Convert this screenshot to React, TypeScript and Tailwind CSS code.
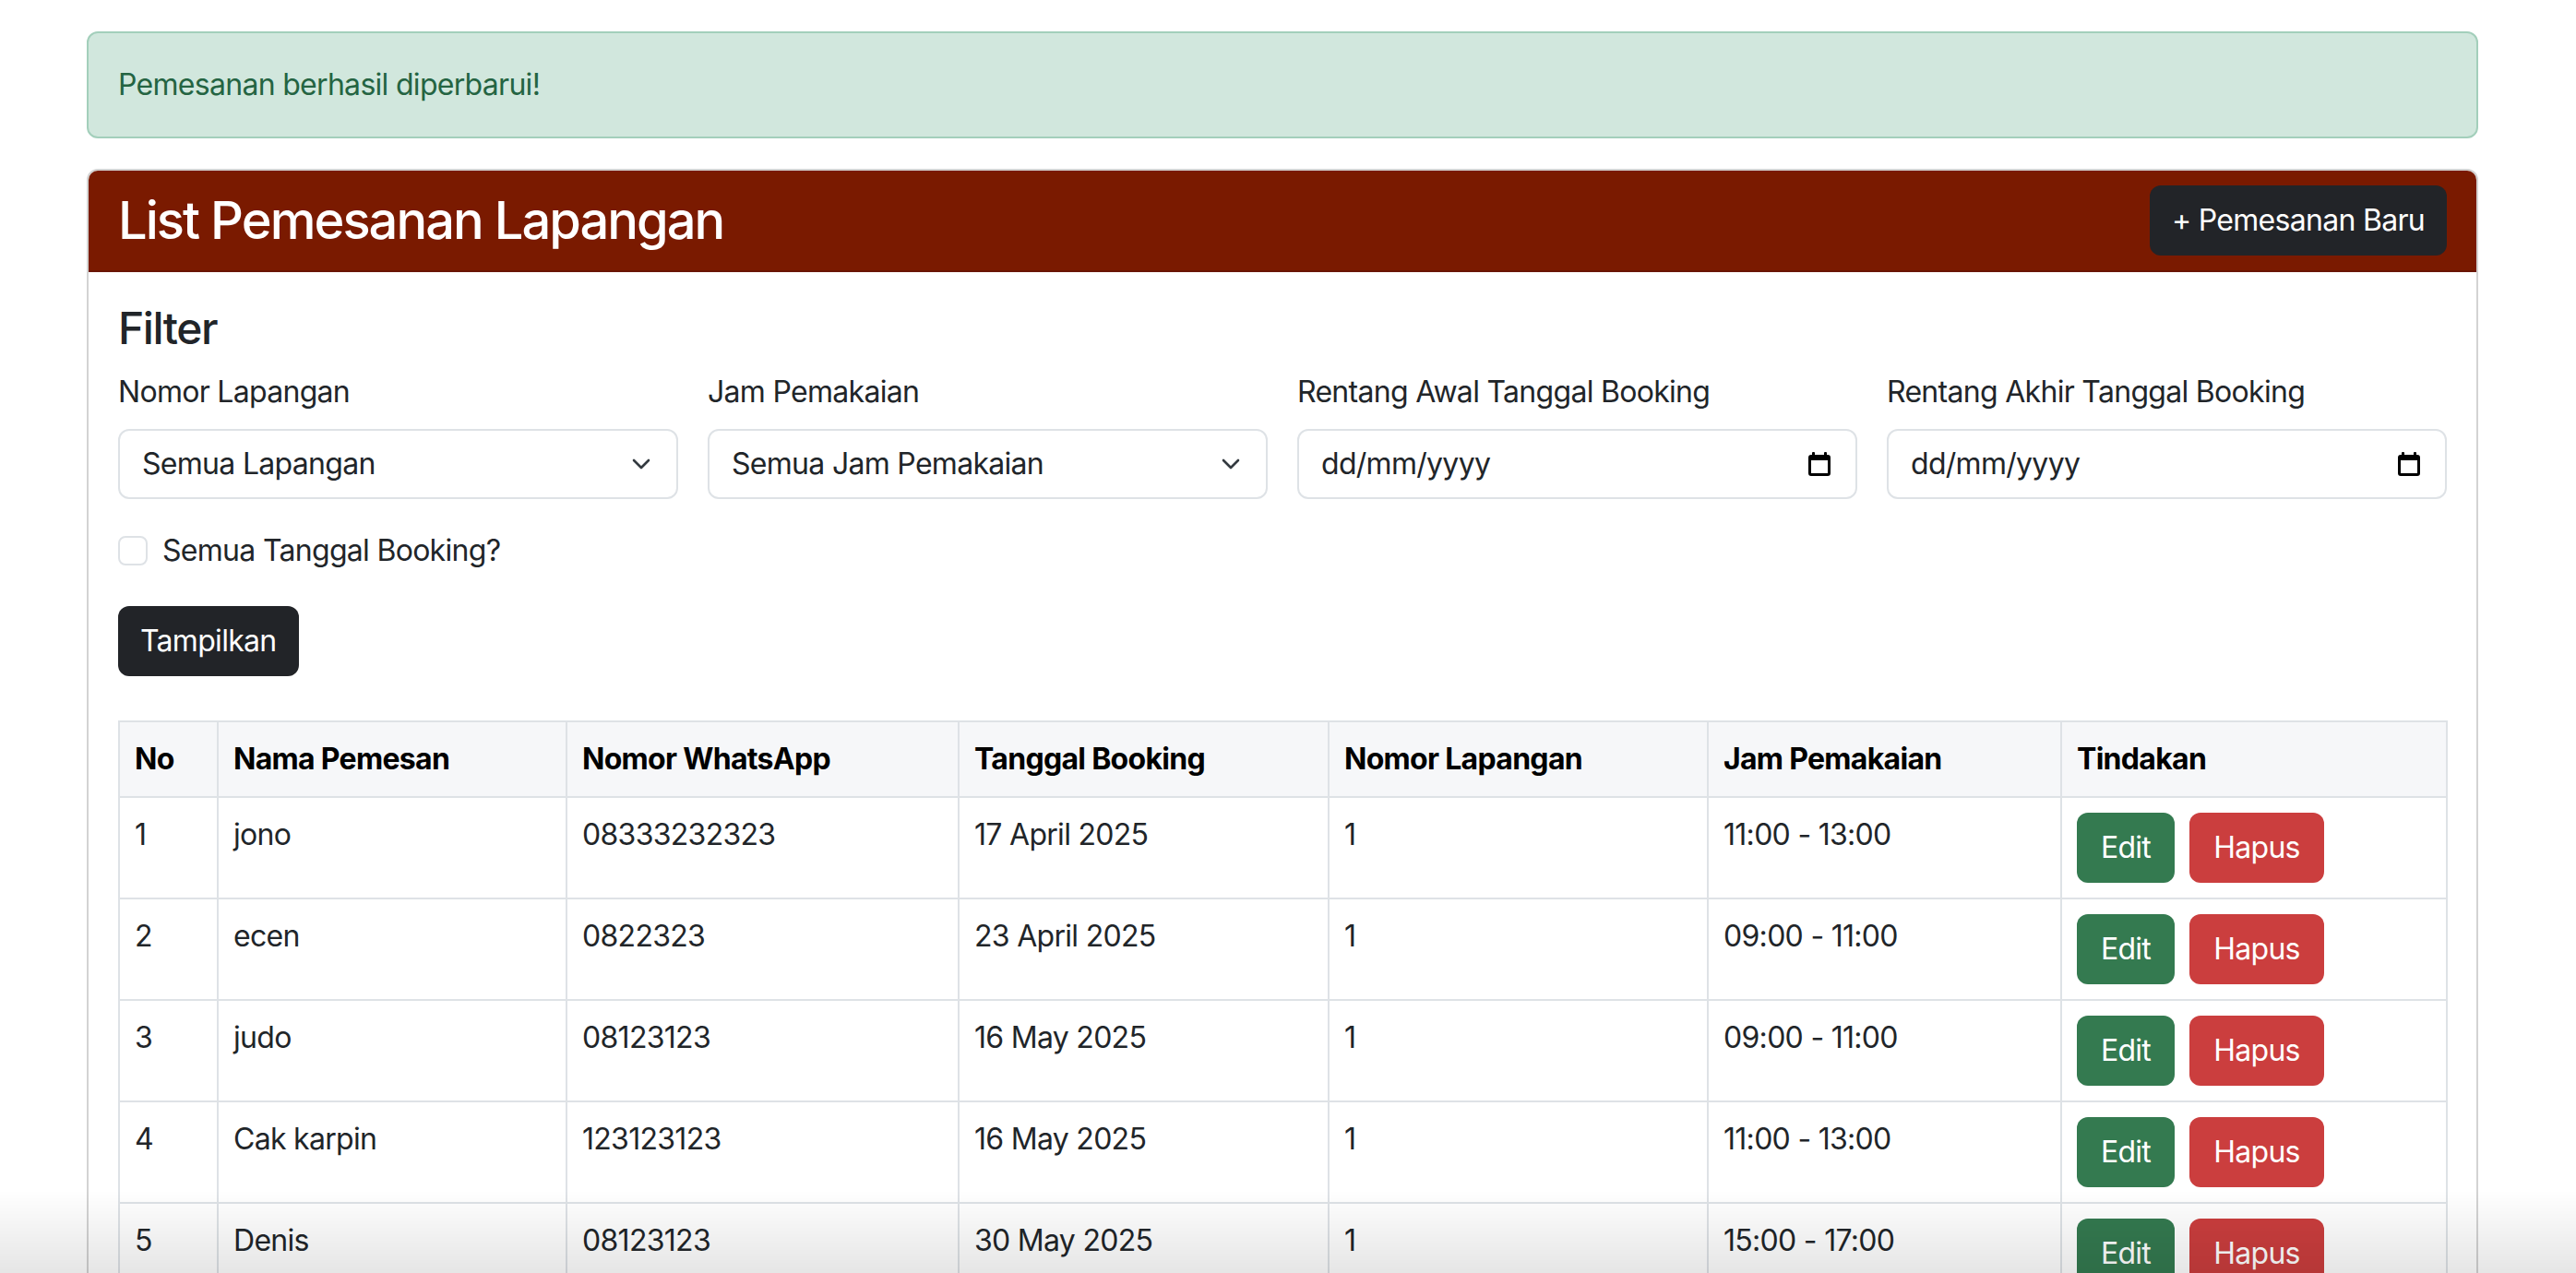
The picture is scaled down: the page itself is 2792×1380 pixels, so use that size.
const ROWS = [
  { no: 1, nama: "jono", wa: "08333232323", tanggal: "17 April 2025", lapangan: "1", jam: "11:00 - 13:00" },
  { no: 2, nama: "ecen", wa: "0822323", tanggal: "23 April 2025", lapangan: "1", jam: "09:00 - 11:00" },
  { no: 3, nama: "judo", wa: "08123123", tanggal: "16 May 2025", lapangan: "1", jam: "09:00 - 11:00" },
  { no: 4, nama: "Cak karpin", wa: "123123123", tanggal: "16 May 2025", lapangan: "1", jam: "11:00 - 13:00" },
  { no: 5, nama: "Denis", wa: "08123123", tanggal: "30 May 2025", lapangan: "1", jam: "15:00 - 17:00" },
];

const HEADERS = [
  { label: "No", w: "w-[107px]" },
  { label: "Nama Pemesan", w: "w-[378px]" },
  { label: "Nomor WhatsApp", w: "w-[425px]" },
  { label: "Tanggal Booking", w: "w-[401px]" },
  { label: "Nomor Lapangan", w: "w-[411px]" },
  { label: "Jam Pemakaian", w: "w-[383px]" },
  { label: "Tindakan", w: "w-[418px]" },
];

function Chevron() {
  return (
    <svg width="22" height="14" viewBox="0 0 22 14" fill="none" stroke="#343a40" strokeWidth="2.6" strokeLinecap="round" strokeLinejoin="round">
      <path d="m3 3 8 8 8-8" />
    </svg>
  );
}

function CalendarIcon() {
  return (
    <svg width="26" height="28" viewBox="0 0 26 28" fill="#000">
      <rect x="5" y="1" width="3" height="5" rx="1" />
      <rect x="18" y="1" width="3" height="5" rx="1" />
      <path d="M4 4h18a3 3 0 0 1 3 3v17a3 3 0 0 1-3 3H4a3 3 0 0 1-3-3V7a3 3 0 0 1 3-3Zm0 6v14h18V10H4Z" fillRule="evenodd" />
    </svg>
  );
}

function FakeSelect({ value }: { value: string }) {
  return (
    <div className="flex h-[76px] items-center justify-between rounded-[12px] border-2 border-[#dee2e6] bg-white pl-[24px] pr-[27px]">
      <span>{value}</span>
      <Chevron />
    </div>
  );
}

function FakeDate() {
  return (
    <div className="flex h-[76px] items-center justify-between rounded-[12px] border-2 border-[#dee2e6] bg-white pl-[24px] pr-[26px]">
      <span>dd/mm/yyyy</span>
      <CalendarIcon />
    </div>
  );
}

export default function App() {
  return (
    <div className="min-h-screen bg-white pt-[34px] text-[32px] leading-[48px] tracking-[-0.022em] text-[#212529]" style={{ fontFamily: "Inter, 'Noto Sans', sans-serif" }}>
      <div className="ml-[94px] w-[2592px]">
        <div className="rounded-[12px] border-2 border-[#a3cfbb] bg-[#d1e7dd] px-[32px] py-[32px] text-[#246442]">
          Pemesanan berhasil diperbarui!
        </div>

        <div className="mt-[33px] overflow-hidden rounded-[12px] border-2 border-[#d3d3d3]">
          <div className="flex items-center justify-between border-b-2 border-[#6a1600] bg-[#7a1a00] px-[32px] py-[16px]">
            <h3 className="text-[56px] leading-[67px] font-medium tracking-[-0.035em] text-white">List Pemesanan Lapangan</h3>
            <button className="h-[76px] rounded-[12px] bg-[#222428] px-[24px] text-white">+ Pemesanan Baru</button>
          </div>

          <div className="p-[32px] pb-[200px]">
            <h4 className="mb-[16px] text-[48px] leading-[58px] font-medium tracking-[-0.03em]">Filter</h4>

            <div className="grid grid-cols-4 gap-x-[32px]">
              <div>
                <label className="mb-[16px] block">Nomor Lapangan</label>
                <FakeSelect value="Semua Lapangan" />
              </div>
              <div>
                <label className="mb-[16px] block">Jam Pemakaian</label>
                <FakeSelect value="Semua Jam Pemakaian" />
              </div>
              <div>
                <label className="mb-[16px] block">Rentang Awal Tanggal Booking</label>
                <FakeDate />
              </div>
              <div>
                <label className="mb-[16px] block">Rentang Akhir Tanggal Booking</label>
                <FakeDate />
              </div>
            </div>

            <div className="mt-[32px] mb-[36px] flex items-start gap-[16px]">
              <span className="mt-[8px] h-[32px] w-[32px] rounded-[8px] border-2 border-[#dee2e6] bg-white" />
              <span>Semua Tanggal Booking?</span>
            </div>

            <button className="h-[76px] rounded-[12px] bg-[#222428] px-[24px] text-white">Tampilkan</button>

            <table className="mt-[48px] w-[2523px] table-fixed border-collapse border-2 border-[#dee2e6]">
              <thead>
                <tr>
                  {HEADERS.map((h) => (
                    <th key={h.label} className={`${h.w} border-2 border-[#dee2e6] bg-[#f6f7f9] px-[16px] py-[16px] text-left font-bold text-black`}>
                      {h.label}
                    </th>
                  ))}
                </tr>
              </thead>
              <tbody>
                {ROWS.map((r) => (
                  <tr key={r.no}>
                    <td className="border-2 border-[#dee2e6] p-[16px] align-top">{r.no}</td>
                    <td className="border-2 border-[#dee2e6] p-[16px] align-top">{r.nama}</td>
                    <td className="border-2 border-[#dee2e6] p-[16px] align-top">{r.wa}</td>
                    <td className="border-2 border-[#dee2e6] p-[16px] align-top">{r.tanggal}</td>
                    <td className="border-2 border-[#dee2e6] p-[16px] align-top">{r.lapangan}</td>
                    <td className="border-2 border-[#dee2e6] p-[16px] align-top">{r.jam}</td>
                    <td className="border-2 border-[#dee2e6] p-[16px] align-top">
                      <div className="flex gap-[16px]">
                        <button className="h-[76px] w-[106px] rounded-[12px] bg-[#347a50] text-white">Edit</button>
                        <button className="h-[76px] w-[146px] rounded-[12px] bg-[#cb3e3e] text-white">Hapus</button>
                      </div>
                    </td>
                  </tr>
                ))}
              </tbody>
            </table>
          </div>
        </div>
      </div>

      {/* soft shade along the bottom edge of the window */}
      <div className="pointer-events-none fixed inset-x-0 bottom-0 h-[90px] bg-linear-to-b from-transparent to-black/10" />
    </div>
  );
}
